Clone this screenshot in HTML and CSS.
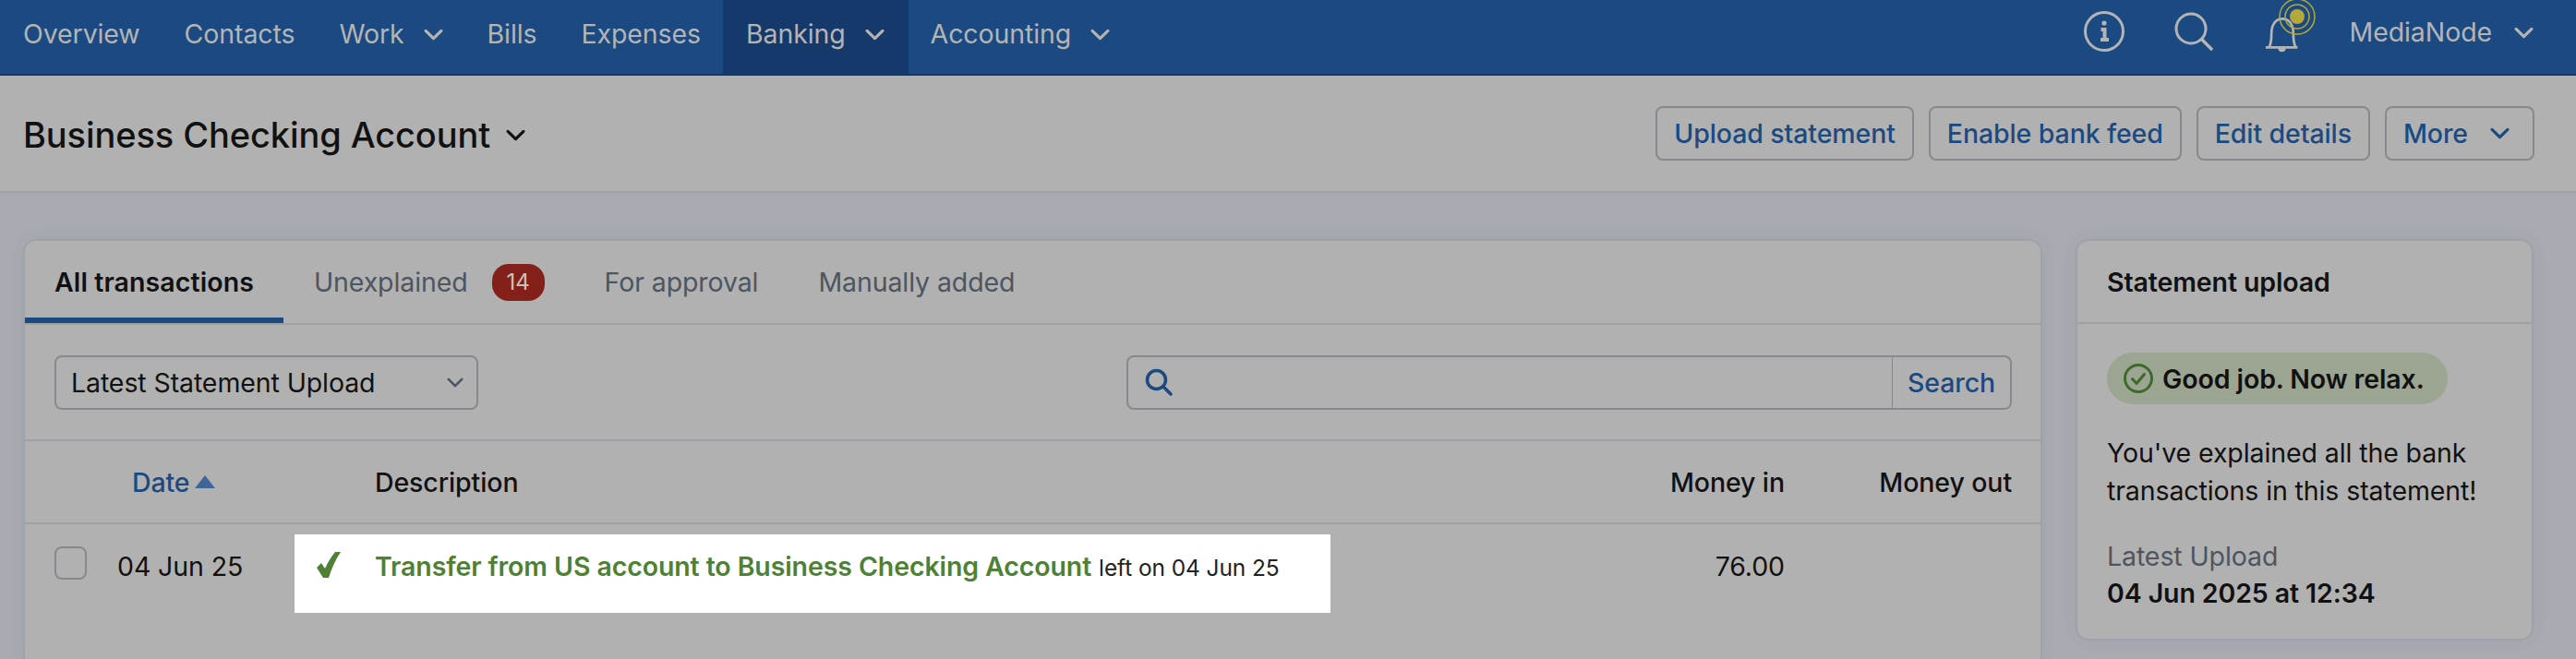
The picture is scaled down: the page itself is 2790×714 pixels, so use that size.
FILE: index.html
```html
<!DOCTYPE html>
<html lang="en">
<head>
<meta charset="utf-8">
<title>Business Checking Account</title>
<link rel="stylesheet" href="styles.css">
</head>
<body>
<header class="nav">
  <nav class="nav-left">
    <a class="nav-item">Overview</a>
    <a class="nav-item">Contacts</a>
    <a class="nav-item">Work<svg class="chev" viewBox="0 0 20 12"><path d="M2 2l8 8 8-8"/></svg></a>
    <a class="nav-item">Bills</a>
    <a class="nav-item">Expenses</a>
    <a class="nav-item active">Banking<svg class="chev" viewBox="0 0 20 12"><path d="M2 2l8 8 8-8"/></svg></a>
    <a class="nav-item">Accounting<svg class="chev" viewBox="0 0 20 12"><path d="M2 2l8 8 8-8"/></svg></a>
  </nav>
  <div class="nav-right">
    <svg class="ico-info" viewBox="0 0 44 44"><circle cx="22" cy="22" r="20.5"/><path class="thick" d="M18.5 20h4v11M18 31h9"/><circle class="dot" cx="22" cy="13" r="2.6"/></svg>
    <svg class="ico-search" viewBox="0 0 42 42"><circle cx="18" cy="18" r="16"/><path d="M29.5 29.5L40 40"/></svg>
    <span class="bell-wrap">
      <svg class="ico-bell" viewBox="0 0 44 46"><path d="M2 41h38M6 41c3-5 3-10 3-17 0-10 5-17 13-17s13 7 13 17c0 7 0 12 3 17"/><path class="fill" d="M17 42h9a4.500 4.500 0 0 1-9 0z"/></svg>
      <svg class="ico-ping" viewBox="0 0 40 40"><circle class="ring" cx="20" cy="20" r="19"/><circle class="ring" cx="20" cy="20" r="13"/><circle class="core" cx="20" cy="20" r="8"/></svg>
    </span>
    <a class="nav-user">MediaNode<svg class="chev" viewBox="0 0 20 12"><path d="M2 2l8 8 8-8"/></svg></a>
  </div>
</header>

<section class="page-head">
  <h1 class="title">Business Checking Account<svg class="chev-title" viewBox="0 0 20 12"><path d="M2 2l8 8 8-8"/></svg></h1>
  <div class="actions">
    <button class="btn">Upload statement</button>
    <button class="btn">Enable bank feed</button>
    <button class="btn">Edit details</button>
    <button class="btn btn-more">More<svg class="chev-btn" viewBox="0 0 20 12"><path d="M2 2l8 8 8-8"/></svg></button>
  </div>
</section>

<main class="content">
  <section class="card main-card">
    <div class="tabs">
      <a class="tab tab-active">All transactions</a>
      <a class="tab">Unexplained<span class="badge">14</span></a>
      <a class="tab">For approval</a>
      <a class="tab">Manually added</a>
    </div>
    <div class="toolbar">
      <div class="select">Latest Statement Upload<svg class="chev-select" viewBox="0 0 20 12"><path d="M2 2l8 8 8-8"/></svg></div>
      <div class="search">
        <svg class="ico-find" viewBox="0 0 30 30"><circle cx="12.500" cy="12.500" r="10"/><path d="M20 20l8 8"/></svg>
        <span class="search-btn">Search</span>
      </div>
    </div>
    <div class="row row-head">
      <span></span>
      <span class="th th-date">Date<svg class="sort" viewBox="0 0 22 14"><path d="M11 0l11 14H0z"/></svg></span>
      <span class="th th-desc">Description</span>
      <span class="th num">Money in</span>
      <span class="th num">Money out</span>
    </div>
    <div class="row row-body">
      <span class="checkbox"></span>
      <span class="cell-date">04 Jun 25</span>
      <div class="highlight">
        <svg class="ico-tick" viewBox="0 0 26 28"><path d="M0 17l5-5 4 6C12 11 16 5 20 0h6C20 9 16 18 13 28H7z"/></svg>
        <span class="desc"><a class="desc-link">Transfer from US account to Business Checking Account</a> <span class="desc-note">left on 04 Jun 25</span></span>
      </div>
      <span class="cell-num">76.00</span>
      <span></span>
    </div>
  </section>

  <aside class="card side-card">
    <h2 class="side-title">Statement upload</h2>
    <div class="side-body">
      <div class="pill">
        <svg class="ico-ok" viewBox="0 0 32 32"><circle cx="16" cy="16" r="14.500"/><path d="M9.500 16.500l4.500 5 8.500-10"/></svg>
        Good job. Now relax.
      </div>
      <p class="side-text">You've explained all the bank transactions in this statement!</p>
      <div class="side-label">Latest Upload</div>
      <div class="side-date">04 Jun 2025 at 12:34</div>
    </div>
  </aside>
</main>
</body>
</html>
```
FILE: styles.css
```css
* { box-sizing: border-box; }
html, body { margin: 0; height: 714px; overflow: hidden; }
body {
  background: #a8abb2;
  color: #111;
  font-family: "Inter", "Liberation Sans", sans-serif;
  font-size: 28.5px;
  letter-spacing: -0.1px;
}
svg { display: block; flex: none; }
svg path, svg circle { fill: none; }

.nav {
  height: 82px;
  display: flex;
  justify-content: space-between;
  background: #1b4a82;
  border-bottom: 2px solid #14396a;
  color: #b4b4b4;
}
.nav-left { display: flex; padding-left: 1px; }
.nav-item {
  display: flex;
  align-items: center;
  gap: 21px;
  padding: 0 24px 10px;
  margin-bottom: -2px;
}
.nav-item.active { background: #14396a; padding-left: 25px; padding-right: 26px; }
.chev { width: 21px; height: 13px; margin-top: 2px; }
.chev path, .chev-title path, .chev-btn path, .chev-select path { stroke-width: 3; stroke-linecap: round; stroke-linejoin: round; }
.chev path { stroke: #b4b4b4; }
.nav-right { display: flex; align-items: center; padding: 0 46px 12px 0; }
.ico-info { width: 44px; height: 44px; margin-right: 54px; }
.ico-info circle, .ico-search circle, .ico-search path, .ico-bell path { stroke: #b4b4b4; stroke-width: 3; }
.ico-info .thick { fill: none; stroke: #b4b4b4; stroke-width: 4; }
.ico-info .dot { fill: #b4b4b4; stroke: none; }
.ico-search { width: 42px; height: 42px; margin-right: 55px; }
.ico-search path { stroke-linecap: round; stroke-width: 3.500; }
.bell-wrap { position: relative; width: 40px; height: 44px; margin-right: 53px; }
.ico-bell { width: 40px; height: 44px; margin-top: 1px; }
.ico-bell .fill { fill: #b4b4b4; stroke: none; }
.ico-ping { position: absolute; left: 16px; top: -14px; width: 40px; height: 40px; }
.ring { stroke: #b5a83a; stroke-width: 1.500; }
.core { fill: #b5a83a; }
.nav-user { display: flex; align-items: center; gap: 24px; }

.page-head {
  height: 127px;
  display: flex;
  align-items: center;
  justify-content: space-between;
  padding: 0 45px 0 25px;
  background: #b1b1b1;
  border-bottom: 2px solid #a0a0a5;
}
.title {
  display: flex;
  align-items: center;
  gap: 17px;
  margin: 2px 0 0;
  font-size: 38px;
  font-weight: 500;
}
.chev-title { width: 21px; height: 13px; margin-top: 2px; }
.chev-title path { stroke: #111; }
.actions { display: flex; gap: 16px; }
.btn {
  height: 59px;
  padding: 0 18px;
  display: flex;
  align-items: center;
  font: inherit;
  letter-spacing: inherit;
  font-weight: 500;
  color: #1b4a82;
  background: transparent;
  border: 2px solid #868a8d;
  border-radius: 8px;
}
.btn-more { gap: 24px; padding-right: 25px; }
.chev-btn { width: 21px; height: 13px; }
.chev-btn path { stroke: #1b4a82; }

.content {
  display: flex;
  align-items: flex-start;
  gap: 36px;
  padding: 50px 46px 0 25px;
}
.card {
  background: #b1b1b1;
  border: 2px solid #a0a1a8;
  border-radius: 14px;
  box-shadow: 0 0 20px rgba(60, 64, 80, 0.06);
}
.main-card { flex: 1; min-width: 0; height: 455px; border-bottom: 0; border-radius: 14px 14px 0 0; }
.side-card { width: 496px; height: 435px; }

.tabs {
  height: 91px;
  display: flex;
  border-bottom: 2px solid #9f9fa6;
}
.tab {
  display: flex;
  align-items: center;
  gap: 26px;
  padding: 0 32px;
  height: 89px;
  color: #4d5660;
}
.tab + .tab { margin-left: 1px; }
.tab-active { color: #111; font-weight: 600; letter-spacing: 0.1px; box-shadow: inset 0 -6px 0 #1b4a82; }
.badge {
  width: 57px;
  height: 40px;
  display: flex;
  align-items: center;
  justify-content: center;
  background: #84201a;
  color: #c9c0bf;
  border-radius: 18px;
  font-size: 24px;
}
.toolbar {
  height: 126px;
  display: flex;
  align-items: center;
  justify-content: space-between;
  padding: 0 31px 0 32px;
  border-bottom: 2px solid #9f9fa6;
}
.select, .search {
  height: 59px;
  display: flex;
  align-items: center;
  border: 2px solid #868a8d;
  border-radius: 8px;
}
.select { width: 459px; padding: 0 14px 0 16px; justify-content: space-between; }
.chev-select { width: 18px; height: 11px; }
.chev-select path { stroke: #4d5660; }
.search { width: 959px; padding-left: 18px; justify-content: space-between; }
.ico-find { width: 30px; height: 30px; }
.ico-find circle, .ico-find path { stroke: #1b4a82; stroke-width: 3.500; }
.ico-find path { stroke-linecap: round; }
.search-btn {
  height: 100%;
  width: 128px;
  display: flex;
  align-items: center;
  justify-content: center;
  border-left: 1px solid #868a8d;
  color: #1b4a82;
  font-weight: 500;
}

.row {
  display: grid;
  grid-template-columns: 68px 192px 1fr 130px 246px;
  padding: 0 31px 0 32px;
}
.row-head {
  height: 90px;
  align-items: center;
  border-bottom: 2px solid #9f9fa6;
}
.th { font-weight: 500; white-space: nowrap; }
.th-date { display: flex; align-items: center; gap: 5px; color: #1b4a82; margin-left: 16px; }
.sort { width: 22px; height: 14px; }
.sort path { fill: #3f6699; }
.th-desc { padding-left: 87px; }
.num { text-align: right; }
.row-body { padding-top: 11px; }
.checkbox {
  width: 35px;
  height: 36px;
  margin-top: 13px;
  border: 2px solid #868a8d;
  border-radius: 8px;
}
.cell-date { padding-top: 17px; }
.highlight {
  height: 85px;
  display: flex;
  align-items: flex-start;
  padding: 17px 0 0 24px;
  margin-right: 362px;
  background: #fff;
}
.ico-tick { width: 26px; height: 28px; margin-right: 37px; margin-top: 2px; }
.ico-tick path { fill: #4f8135; }
.desc-link { color: #4f8135; font-weight: 600; }
.desc-note { font-size: 24.5px; color: #222; }
.cell-num { padding-top: 17px; text-align: right; }

.side-title {
  margin: 0;
  height: 90px;
  display: flex;
  align-items: center;
  padding-left: 32px;
  font-size: 28.5px;
  font-weight: 600;
  border-bottom: 2px solid #9f9fa6;
}
.side-body { padding: 31px 32px 0; }
.pill {
  display: inline-flex;
  align-items: center;
  gap: 10px;
  height: 56px;
  padding: 0 25px 0 18px;
  background: #9ca592;
  border-radius: 28px;
  font-weight: 600;
}
.ico-ok { width: 32px; height: 32px; }
.ico-ok circle, .ico-ok path { stroke: #3c6a2a; stroke-width: 3; }
.ico-ok path { stroke-linecap: round; stroke-linejoin: round; }
.side-text { margin: 32px 0 31px; line-height: 41px; }
.side-label { color: #4d5660; line-height: 40px; }
.side-date { font-weight: 600; line-height: 40px; }
```
